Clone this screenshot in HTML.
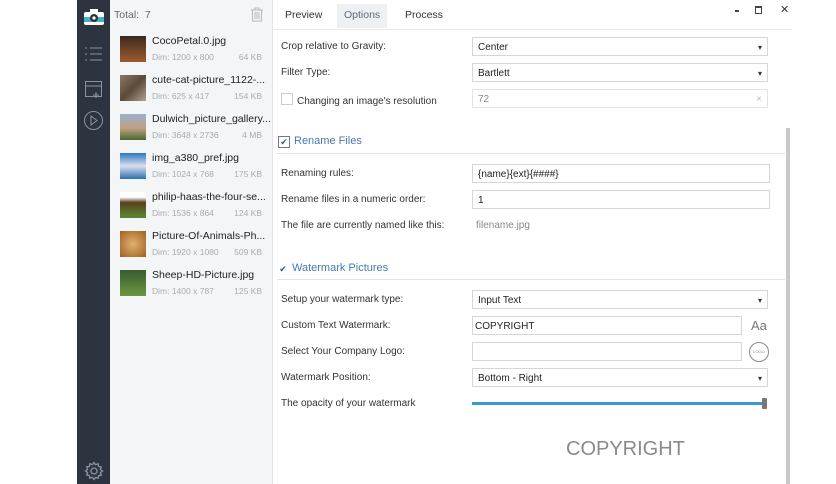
<!DOCTYPE html><html><head><style>
body{margin:0;width:836px;height:484px;background:#fff;font-family:"Liberation Sans",sans-serif;position:relative;overflow:hidden}
.a{position:absolute}
.sb{left:77px;top:0;width:33px;height:484px;background:#2d3440}
.fl{left:110px;top:0;width:162px;height:484px;background:#f4f5f7;border-right:1px solid #e2e4e8}
.nm{font-size:10.5px;color:#222;left:152px;white-space:nowrap}
.dm{font-size:8.5px;color:#a8abb0;left:152px;white-space:nowrap}
.kb{font-size:8.5px;color:#a8abb0;left:222px;width:40px;text-align:right;white-space:nowrap}
.th{left:120px;width:26px;height:26px}
.lb{left:281px;font-size:10px;color:#333}
.in{left:472px;width:296px;height:19px;border:1px solid #d4d6da;background:#fff;font-size:10px;color:#222;line-height:19px;padding-left:5px;box-sizing:border-box}
.dd::after{content:"▾";position:absolute;right:5px;top:0;font-size:8px;color:#333}
.hd{left:278px;font-size:11px;color:#4a78b0}
.cb{display:inline-block;width:10px;height:10px;border:1px solid #777;font-size:9px;line-height:10px;text-align:center;color:#2b5aa0;margin-right:4px;vertical-align:-1px}
.ln{left:277px;width:508px;height:1px;background:#e3e4e6}
</style></head><body>
<div class="a sb"></div>
<svg class="a" style="left:83px;top:8px" width="22" height="18" viewBox="0 0 22 18"><rect x="1" y="4" width="20" height="13" rx="2" fill="#fff"/><rect x="7" y="1" width="8" height="4" fill="#fff"/><rect x="1" y="9" width="20" height="5" fill="#4ab0c8"/><circle cx="11" cy="10" r="4" fill="#2d3440"/><circle cx="11" cy="10" r="1.6" fill="#fff"/></svg>
<svg class="a" style="left:84px;top:45px" width="20" height="18" stroke="#8a93a3" fill="none"><path d="M1 3h2M6 3h12M1 9h2M6 9h12M1 15h2M6 15h12"/></svg>
<svg class="a" style="left:84px;top:80px" width="20" height="20" stroke="#8a93a3" fill="none"><rect x="1.5" y="1.5" width="16" height="15"/><path d="M1.5 6h16M12 12v6M9 15h6"/></svg>
<svg class="a" style="left:83px;top:110px" width="21" height="21" stroke="#8a93a3" fill="none"><circle cx="10.5" cy="10.5" r="9"/><path d="M8 6l6 4.5-6 4.5z"/></svg>
<svg class="a" style="left:84px;top:461px" width="20" height="20" stroke="#8a93a3" fill="none" stroke-width="1.3"><circle cx="10" cy="10" r="3"/><path d="M10 1.5l1.6 2.2 2.6-.9.4 2.7 2.7.4-.9 2.6 2.2 1.5-2.2 1.6.9 2.6-2.7.4-.4 2.7-2.6-.9L10 18.5l-1.6-2.2-2.6.9-.4-2.7-2.7-.4.9-2.6L1.5 10l2.2-1.6-.9-2.6 2.7-.4.4-2.7 2.6.9z"/></svg>
<div class="a fl"></div>
<div class="a" style="left:114px;top:9px;font-size:10.5px;color:#666">Total:&nbsp; 7</div>
<svg class="a" style="left:250px;top:7px" width="14" height="15" stroke="#b5b8bd" fill="none"><path d="M1 3h12M5 3V1h4v2M2.5 3v11h9V3M5 5v7M7 5v7M9 5v7"/></svg>
<div class="a th" style="top:36px;background:linear-gradient(#3a2a20,#a05a30)"></div>
<div class="a nm" style="top:35px">CocoPetal.0.jpg</div><div class="a dm" style="top:52px">Dim: 1200 x 800</div><div class="a kb" style="top:52px">64 KB</div>
<div class="a th" style="top:75px;background:linear-gradient(135deg,#8a7a6a,#5a4a3a,#b0a090)"></div>
<div class="a nm" style="top:74px">cute-cat-picture_1122-...</div><div class="a dm" style="top:91px">Dim: 625 x 417</div><div class="a kb" style="top:91px">154 KB</div>
<div class="a th" style="top:114px;background:linear-gradient(#9ab0d0,#c0a080 55%,#4a6a30)"></div>
<div class="a nm" style="top:113px">Dulwich_picture_gallery...</div><div class="a dm" style="top:130px">Dim: 3648 x 2736</div><div class="a kb" style="top:130px">4 MB</div>
<div class="a th" style="top:153px;background:linear-gradient(#2a7ac0,#dde 50%,#2a70b0)"></div>
<div class="a nm" style="top:152px">img_a380_pref.jpg</div><div class="a dm" style="top:169px">Dim: 1024 x 768</div><div class="a kb" style="top:169px">175 KB</div>
<div class="a th" style="top:192px;background:linear-gradient(#fff 20%,#5a4020 40%,#5a8a30)"></div>
<div class="a nm" style="top:191px">philip-haas-the-four-se...</div><div class="a dm" style="top:208px">Dim: 1536 x 864</div><div class="a kb" style="top:208px">124 KB</div>
<div class="a th" style="top:231px;background:radial-gradient(#e0b070,#a06020)"></div>
<div class="a nm" style="top:230px">Picture-Of-Animals-Ph...</div><div class="a dm" style="top:247px">Dim: 1920 x 1080</div><div class="a kb" style="top:247px">509 KB</div>
<div class="a th" style="top:270px;background:linear-gradient(#3a5a30,#6a9a40)"></div>
<div class="a nm" style="top:269px">Sheep-HD-Picture.jpg</div><div class="a dm" style="top:286px">Dim: 1400 x 787</div><div class="a kb" style="top:286px">125 KB</div>

<div class="a" style="left:273px;top:29px;width:519px;height:1px;background:#e8e9eb"></div>
<div class="a" style="left:337px;top:4px;width:50px;height:24px;background:#eef0f3"></div>
<div class="a" style="left:285px;top:9px;font-size:10.5px;color:#333">Preview</div>
<div class="a" style="left:344px;top:9px;font-size:10.5px;color:#5a6a80">Options</div>
<div class="a" style="left:405px;top:9px;font-size:10.5px;color:#333">Process</div>
<div class="a" style="left:735px;top:10px;width:4px;height:2px;background:#444"></div>
<div class="a" style="left:755px;top:6px;width:5px;height:5px;border:1px solid #444;border-top-width:2px"></div>
<div class="a" style="left:780px;top:3px;font-size:11px;color:#333">✕</div>
<div class="a" style="left:786px;top:128px;width:4px;height:356px;background:#c9c9c9"></div>

<div class="a lb" style="top:41px">Crop relative to Gravity:</div><div class="a in dd" style="top:37px">Center</div>
<div class="a lb" style="top:67px">Filter Type:</div><div class="a in dd" style="top:63px">Bartlett</div>
<div class="a lb" style="top:93px"><span class="cb" style="border-color:#ccc"></span>Changing an image's resolution</div><div class="a in" style="top:89px;color:#888;border-color:#e2e3e5">72<span style="position:absolute;right:5px;color:#bbb">×</span></div>
<div class="a hd" style="top:135px"><span class="cb">✔</span>Rename Files</div><div class="a ln" style="top:153px"></div>
<div class="a lb" style="top:168px">Renaming rules:</div><div class="a in" style="top:164px;width:298px">{name}{ext}{####}</div>
<div class="a lb" style="top:194px">Rename files in a numeric order:</div><div class="a in" style="top:190px;width:298px">1</div>
<div class="a lb" style="top:220px">The file are currently named like this:</div><div class="a" style="left:476px;top:220px;font-size:10px;color:#888">filename.jpg</div>
<div class="a hd" style="top:262px"><span class="cb" style="border:none">✔</span>Watermark Pictures</div><div class="a ln" style="top:279px"></div>
<div class="a lb" style="top:294px">Setup your watermark type:</div><div class="a in dd" style="top:290px">Input Text</div>
<div class="a lb" style="top:320px">Custom Text Watermark:</div><div class="a in" style="top:316px;width:270px;padding-left:2px">COPYRIGHT</div>
<div class="a" style="left:751px;top:318px;font-size:13px;color:#777">Aa</div>
<div class="a lb" style="top:346px">Select Your Company Logo:</div><div class="a in" style="top:342px;width:270px"></div>
<div class="a" style="left:749px;top:342px;width:18px;height:18px;border:1px solid #888;border-radius:50%;font-size:4px;color:#888;text-align:center;line-height:18px">LOGO</div>
<div class="a lb" style="top:372px">Watermark Position:</div><div class="a in dd" style="top:368px">Bottom - Right</div>
<div class="a lb" style="top:398px">The opacity of your watermark</div>
<div class="a" style="left:472px;top:402px;width:292px;height:3px;background:#3a9ad6"></div>
<div class="a" style="left:762px;top:398px;width:5px;height:11px;background:#777;border-radius:1px"></div>
<div class="a" style="left:566px;top:438px;font-size:20px;color:#8a8a8a">COPYRIGHT</div>
</body></html>
